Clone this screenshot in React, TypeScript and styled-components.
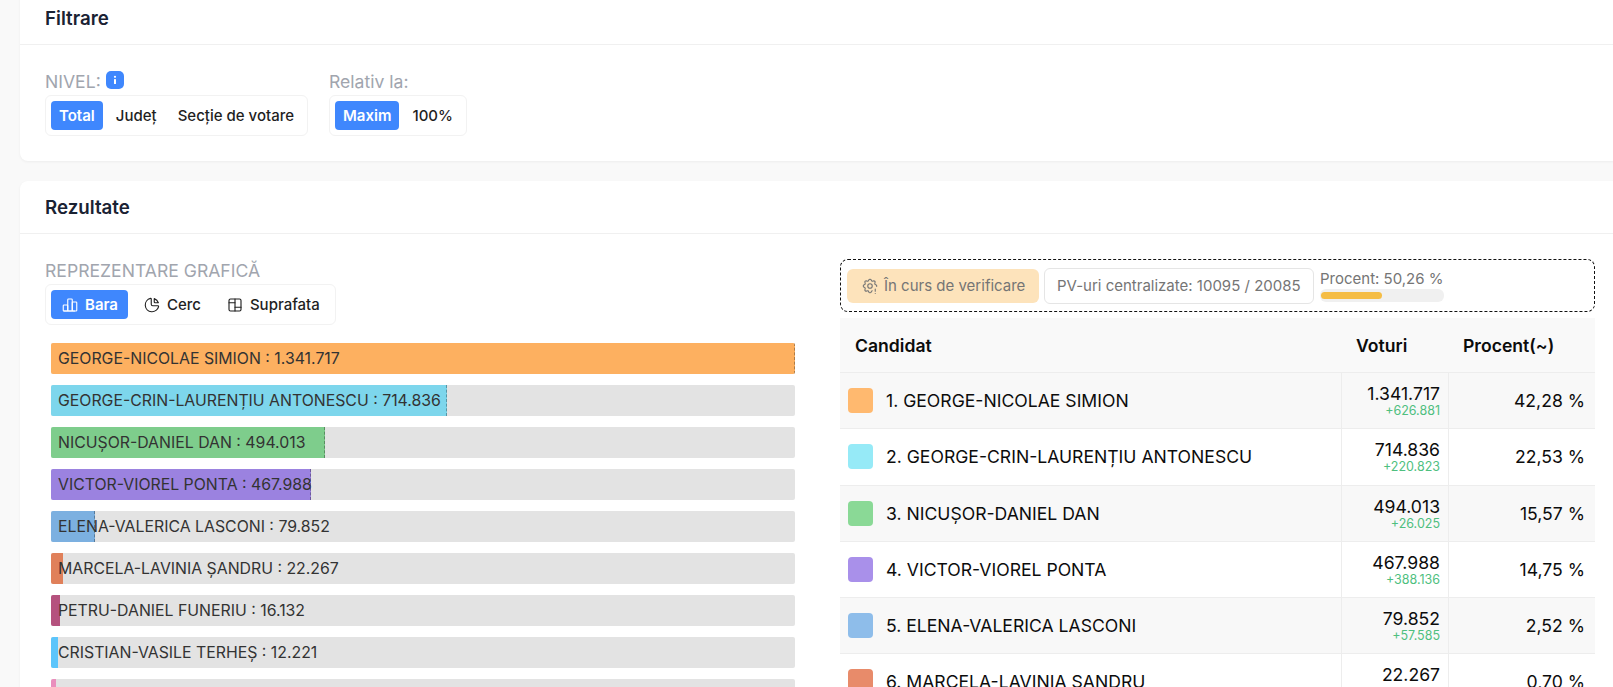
import React from "react";
import styled, { createGlobalStyle } from "styled-components";
import { TbChartBar, TbChartPie, TbLayoutBoard, TbSettingsExclamation } from "react-icons/tb";

const MAX_VOTES = 1341717;

const bars = [
  { name: "GEORGE-NICOLAE SIMION", votes: 1341717, color: "#fdb060", live: true },
  { name: "GEORGE-CRIN-LAURENȚIU ANTONESCU", votes: 714836, color: "#7dd6ec", live: true },
  { name: "NICUȘOR-DANIEL DAN", votes: 494013, color: "#7ecd8c", live: true },
  { name: "VICTOR-VIOREL PONTA", votes: 467988, color: "#9b82e0", live: true },
  { name: "ELENA-VALERICA LASCONI", votes: 79852, color: "#7cb0e0", live: true },
  { name: "MARCELA-LAVINIA ȘANDRU", votes: 22267, color: "#e0805a" },
  { name: "PETRU-DANIEL FUNERIU", votes: 16132, color: "#b5527e" },
  { name: "CRISTIAN-VASILE TERHEȘ", votes: 12221, color: "#5cc5fb" },
  { votes: 8500, color: "#ea8fbd" },
];

const rows = [
  { name: "1. GEORGE-NICOLAE SIMION", votes: "1.341.717", delta: "+626.881", pct: "42,28 %", color: "#ffb96f" },
  { name: "2. GEORGE-CRIN-LAURENȚIU ANTONESCU", votes: "714.836", delta: "+220.823", pct: "22,53 %", color: "#96eaf7" },
  { name: "3. NICUȘOR-DANIEL DAN", votes: "494.013", delta: "+26.025", pct: "15,57 %", color: "#8ad996" },
  { name: "4. VICTOR-VIOREL PONTA", votes: "467.988", delta: "+388.136", pct: "14,75 %", color: "#a990ea" },
  { name: "5. ELENA-VALERICA LASCONI", votes: "79.852", delta: "+57.585", pct: "2,52 %", color: "#8ebdea" },
  { name: "6. MARCELA-LAVINIA ȘANDRU", votes: "22.267", pct: "0,70 %", color: "#e88b6a" },
];

const formatVotes = (n: number) => n.toString().replace(/\B(?=(\d{3})+(?!\d))/g, ".");

export default function App() {
  return (
    <>
      <GlobalStyle />
      <Page>
        <Card>
          <CardHeader>Filtrare</CardHeader>
          <FilterBody>
            <div>
              <Label>
                NIVEL:
                <InfoBadge>
                  <svg width="18" height="18" viewBox="0 0 18 18">
                    <circle cx="9" cy="5.8" r="1.1" fill="#fff" />
                    <rect x="8" y="8" width="2" height="5" rx="0.6" fill="#fff" />
                  </svg>
                </InfoBadge>
              </Label>
              <Segment>
                <SegmentButton $active>Total</SegmentButton>
                <SegmentButton>Județ</SegmentButton>
                <SegmentButton>Secție de votare</SegmentButton>
              </Segment>
            </div>
            <div>
              <Label>Relativ la:</Label>
              <Segment>
                <SegmentButton $active>Maxim</SegmentButton>
                <SegmentButton>100%</SegmentButton>
              </Segment>
            </div>
          </FilterBody>
        </Card>

        <Card>
          <CardHeader>Rezultate</CardHeader>
          <ResultsBody>
            <div>
              <Label>REPREZENTARE GRAFICĂ</Label>
              <Segment>
                <IconButton $active>
                  <TbChartBar size={18} strokeWidth={1.5} />
                  Bara
                </IconButton>
                <IconButton>
                  <TbChartPie size={18} strokeWidth={1.5} />
                  Cerc
                </IconButton>
                <IconButton>
                  <TbLayoutBoard size={18} strokeWidth={1.5} />
                  Suprafata
                </IconButton>
              </Segment>
              <BarList>
                {bars.map((bar) => (
                  <BarTrack key={bar.color}>
                    <BarFill
                      $color={bar.color}
                      $live={bar.live}
                      style={{ width: `${(bar.votes / MAX_VOTES) * 100}%` }}
                    />
                    {bar.name && (
                      <BarLabel>
                        {bar.name} : {formatVotes(bar.votes)}
                      </BarLabel>
                    )}
                  </BarTrack>
                ))}
              </BarList>
            </div>

            <div>
              <StatusBox>
                <StatusChip>
                  <TbSettingsExclamation size={18} strokeWidth={1.5} />
                  În curs de verificare
                </StatusChip>
                <CountChip>PV-uri centralizate: 10095 / 20085</CountChip>
                <Progress>
                  <ProgressText>Procent: 50,26 %</ProgressText>
                  <ProgressTrack>
                    <ProgressFill style={{ width: "50.26%" }} />
                  </ProgressTrack>
                </Progress>
              </StatusBox>

              <Table>
                <HeadRow>
                  <HeadCell>Candidat</HeadCell>
                  <HeadCell>Voturi</HeadCell>
                  <HeadCell>Procent(~)</HeadCell>
                </HeadRow>
                {rows.map((row, i) => (
                  <Row key={row.name} $odd={i % 2 === 0}>
                    <NameCell>
                      <Swatch $color={row.color} />
                      {row.name}
                    </NameCell>
                    <VotesCell>
                      <Votes>{row.votes}</Votes>
                      {row.delta && <Delta>{row.delta}</Delta>}
                    </VotesCell>
                    <PercentCell>{row.pct}</PercentCell>
                  </Row>
                ))}
              </Table>
            </div>
          </ResultsBody>
        </Card>
      </Page>
    </>
  );
}

const GlobalStyle = createGlobalStyle`
  html, body {
    margin: 0;
    height: 687px;
    overflow: hidden;
    background: #f9f9f9;
    font-family: Inter, "Noto Sans", sans-serif;
  }
  * {
    box-sizing: border-box;
  }
`;

const Page = styled.div`
  display: flex;
  flex-direction: column;
  gap: 20px;
  width: 1640px;
  margin-top: -8px;
  padding-left: 20px;
`;

const Card = styled.section`
  width: 1600px;
  background: #fff;
  border-radius: 8px;
  box-shadow: 0 1px 3px rgba(0, 0, 0, 0.05);
`;

const CardHeader = styled.h2`
  display: flex;
  align-items: center;
  height: 53px;
  margin: 0;
  padding: 0 25px;
  border-bottom: 1px solid #f0f0f0;
  font-size: 18.72px;
  font-weight: 600;
  color: #1a2233;
`;

const FilterBody = styled.div`
  display: flex;
  gap: 21px;
  padding: 25px;
`;

const ResultsBody = styled.div`
  display: grid;
  grid-template-columns: 750px 755px;
  gap: 45px;
  padding: 25px;
`;

const Label = styled.div`
  display: flex;
  align-items: flex-start;
  gap: 5px;
  height: 25px;
  padding-top: 1px;
  font-size: 17.6px;
  line-height: 22px;
  color: #a1a5ae;
`;

const InfoBadge = styled.span`
  display: block;
  width: 18px;
  height: 18px;
  background: #3f87fd;
  border-radius: 5px;
`;

const Segment = styled.div`
  display: inline-flex;
  gap: 5px;
  padding: 5px;
  background: #fff;
  border: 1px solid #f2f2f2;
  border-radius: 6px;
`;

const SegmentButton = styled.div<{ $active?: boolean }>`
  display: flex;
  align-items: center;
  height: 29px;
  padding: 0 8px;
  border-radius: 4px;
  font-size: 15px;
  font-weight: ${(props) => (props.$active ? 600 : 500)};
  color: ${(props) => (props.$active ? "#fff" : "#1f1f1f")};
  background: ${(props) => (props.$active ? "#3f87fd" : "transparent")};
`;

const IconButton = styled(SegmentButton)`
  gap: 6px;
  padding: 0 10px;
`;

const BarList = styled.div`
  display: flex;
  flex-direction: column;
  gap: 11px;
  margin-top: 18px;
  margin-left: 6px;
`;

const BarTrack = styled.div`
  position: relative;
  display: flex;
  align-items: center;
  height: 31px;
  padding-left: 7px;
  background: #e3e3e3;
  border-radius: 2px;
  overflow: hidden;
`;

const BarFill = styled.div<{ $color: string; $live?: boolean }>`
  position: absolute;
  top: 0;
  bottom: 0;
  left: 0;
  background: ${(props) => props.$color};
  border-right: ${(props) => (props.$live ? "1px dashed rgba(0, 0, 0, 0.3)" : "none")};
`;

const BarLabel = styled.span`
  position: relative;
  font-size: 15.84px;
  color: #333;
  white-space: nowrap;
`;

const StatusBox = styled.div`
  display: flex;
  align-items: center;
  gap: 5px;
  height: 53px;
  padding: 0 6px;
  border: 1px dashed #111;
  border-radius: 8px;
`;

const StatusChip = styled.div`
  display: flex;
  align-items: center;
  gap: 5px;
  width: 192px;
  height: 34px;
  padding-left: 14px;
  background: #fde3bb;
  border-radius: 6px;
  font-size: 15px;
  color: #757575;
`;

const CountChip = styled.div`
  display: flex;
  align-items: center;
  width: 270px;
  height: 36px;
  padding-left: 12px;
  background: #fff;
  border: 1px solid #e5e5e5;
  border-radius: 6px;
  font-size: 15px;
  color: #757575;
`;

const Progress = styled.div`
  display: flex;
  flex-direction: column;
  width: 124px;
  margin-left: 1px;
`;

const ProgressText = styled.div`
  font-size: 15px;
  line-height: 18px;
  color: #757575;
  white-space: nowrap;
`;

const ProgressTrack = styled.div`
  display: flex;
  align-items: center;
  height: 13px;
  margin-top: 1px;
  padding: 0 1px;
  background: #f0f0f0;
  border-radius: 6px;
`;

const ProgressFill = styled.div`
  height: 7px;
  background: #f5bd45;
  border-radius: 4px;
`;

const Table = styled.div`
  display: flex;
  flex-direction: column;
  margin-top: 6px;
`;

const HeadRow = styled.div`
  display: grid;
  grid-template-columns: 501px 107px 147px;
  height: 55px;
  background: #f9f9f9;
  border-bottom: 1px solid #ededed;
`;

const HeadCell = styled.div`
  display: flex;
  align-items: center;
  padding-left: 15px;
  font-size: 17.6px;
  font-weight: 600;
  color: #0c0c0c;
`;

const Row = styled.div<{ $odd: boolean }>`
  display: grid;
  grid-template-columns: 501px 107px 147px;
  height: 56.25px;
  background: ${(props) => (props.$odd ? "#f8f8f8" : "#fff")};
  border-bottom: 1px solid #ededed;
`;

const NameCell = styled.div`
  display: flex;
  align-items: center;
  gap: 13px;
  padding-left: 8px;
  font-size: 17.6px;
  color: #0c0c0c;
`;

const Swatch = styled.span<{ $color: string }>`
  width: 25px;
  height: 25px;
  border-radius: 4px;
  background: ${(props) => props.$color};
`;

const VotesCell = styled.div`
  display: flex;
  flex-direction: column;
  align-items: flex-end;
  padding: 11px 8px 0 0;
  border-left: 1px solid #ededed;
`;

const Votes = styled.div`
  font-size: 17.6px;
  line-height: 20px;
  color: #0c0c0c;
`;

const Delta = styled.div`
  font-size: 12.5px;
  line-height: 13px;
  color: #4fbf7f;
`;

const PercentCell = styled.div`
  display: flex;
  align-items: center;
  justify-content: flex-end;
  padding-right: 10px;
  border-left: 1px solid #ededed;
  font-size: 17.6px;
  color: #0c0c0c;
`;
